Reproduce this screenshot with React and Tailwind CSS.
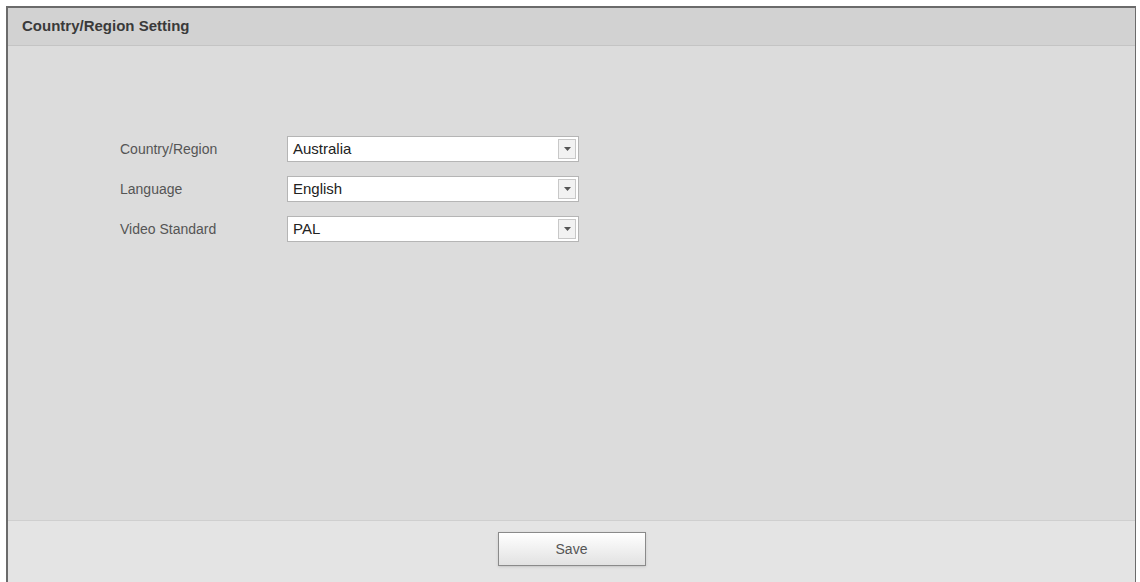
export default function App() {
  const rows = [
    { label: "Country/Region", value: "Australia" },
    { label: "Language", value: "English" },
    { label: "Video Standard", value: "PAL" },
  ];
  return (
    <div className="w-[1140px] h-[582px] bg-white pt-[6px] pl-[6px] pr-[4px]" style={{ fontFamily: '"Liberation Sans", Arial, sans-serif' }}>
      <div className="h-full flex flex-col border-l-2 border-t-2 border-r border-[#6b6b6b] bg-[#dcdcdc]">
        <div className="h-[38px] shrink-0 bg-[#d2d2d2] border-b border-[#c4c4c4] flex items-center pl-[14px] text-[15px] font-bold text-[#3a3a3a]">
          Country/Region Setting
        </div>
        <div className="flex-1 pt-[90px] pl-[112px] flex flex-col gap-[14px]">
          {rows.map((r) => (
            <div key={r.label} className="flex items-center h-[26px]">
              <span className="w-[167px] text-[14px] text-[#555]">{r.label}</span>
              <div className="w-[292px] h-[26px] bg-white border border-[#b5b5b5] flex items-center justify-between pl-[5px] pr-[2px]">
                <span className="text-[15px] text-[#222]">{r.value}</span>
                <span className="w-[18px] h-[20px] border border-[#c8c8c8] bg-[#f2f2f2] flex items-center justify-center">
                  <svg width="7" height="4" viewBox="0 0 7 4"><path d="M0 0h7L3.5 4z" fill="#555" /></svg>
                </span>
              </div>
            </div>
          ))}
        </div>
        <div className="h-[62px] shrink-0 border-t border-[#cfcfcf] bg-[#e4e4e4] flex justify-center pt-[11px]">
          <button className="w-[148px] h-[34px] border border-[#8a8a8a] bg-gradient-to-b from-white to-[#e2e2e2] text-[14px] text-[#555] shadow-sm">
            Save
          </button>
        </div>
      </div>
    </div>
  );
}
